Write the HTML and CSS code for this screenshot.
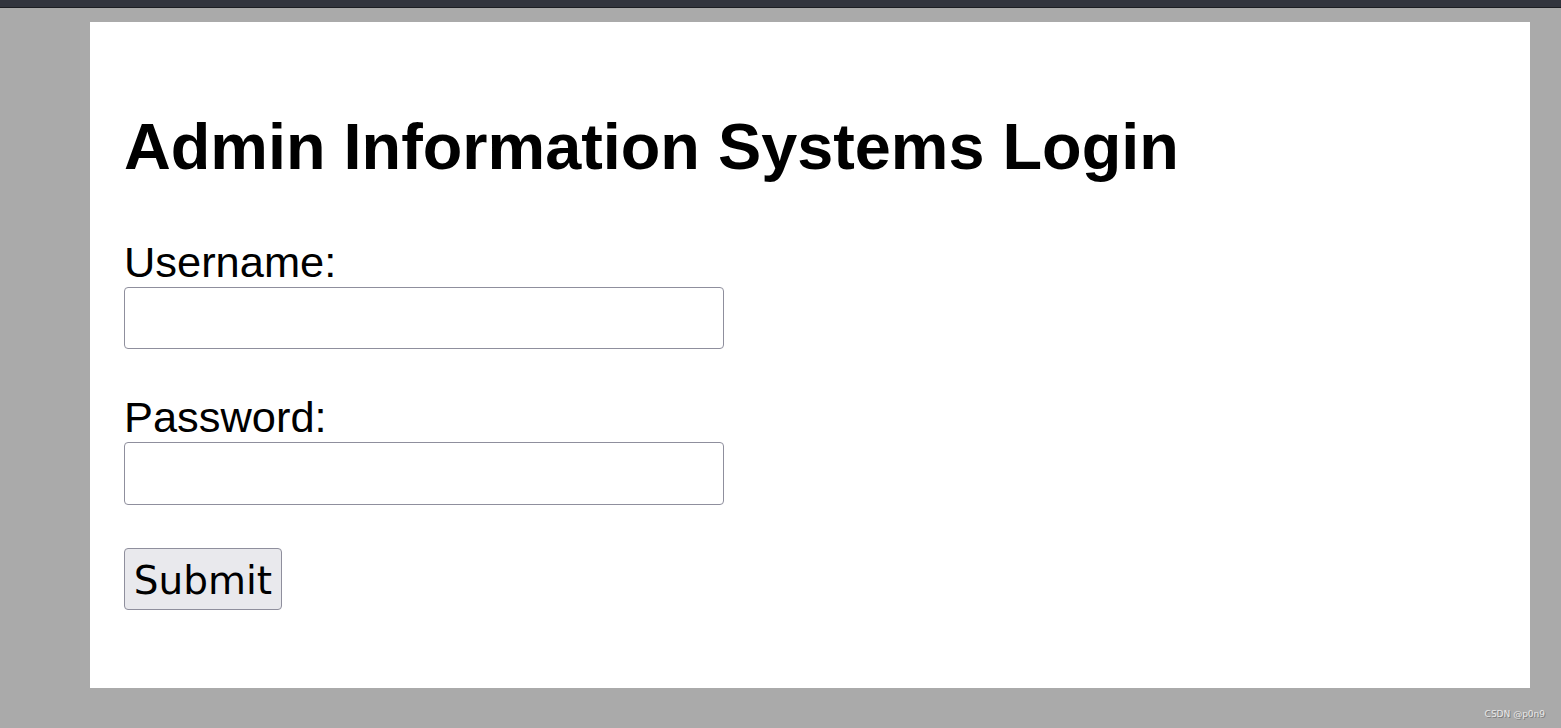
FILE: index.html
```html
<!DOCTYPE html>
<html>
<head>
<meta charset="utf-8">
<title>Admin Login</title>
<link rel="stylesheet" href="styles.css">
</head>
<body>
<div class="topbar"></div>
<main class="card">
  <h1 class="title">Admin Information Systems Login</h1>
  <form class="form">
    <label class="label" for="username">Username:</label>
    <input class="field" id="username" type="text">
    <label class="label label-pass" for="password">Password:</label>
    <input class="field field-pass" id="password" type="password">
    <button class="submit" type="button">Submit</button>
  </form>
</main>
<div class="watermark">CSDN @p0n9</div>
</body>
</html>
```

FILE: styles.css
```css
html, body {
  margin: 0;
  padding: 0;
}
body {
  background: #aaaaaa;
  width: 1561px;
  height: 728px;
  overflow: hidden;
  font-family: "Liberation Sans", Arial, sans-serif;
  position: relative;
}
.topbar {
  height: 7px;
  background: #32353e;
  border-bottom: 1px solid #1c1e23;
}
.card {
  margin: 14px 0 0 90px;
  width: 1440px;
  height: 666px;
  background: #ffffff;
  box-sizing: border-box;
  padding: 0 34px;
  overflow: hidden;
}
.title {
  margin: 0;
  padding-top: 92px;
  font-size: 64.8px;
  line-height: 65px;
  font-weight: bold;
  color: #000;
}
.form {
  display: flex;
  flex-direction: column;
  align-items: flex-start;
  margin-top: 58px;
}
.label {
  font-size: 43.4px;
  line-height: 50px;
  color: #000;
}
.label-pass {
  margin-top: 43px;
}
.field {
  margin: 0;
  width: 600px;
  height: 62px;
  box-sizing: border-box;
  border: 1px solid #8f8f9d;
  border-radius: 4px;
  background: #fff;
  padding: 0 8px;
  font-size: 30px;
}
.field-pass {
  height: 63px;
}
.submit {
  margin-top: 43px;
  width: 158px;
  height: 62px;
  box-sizing: border-box;
  border: 1px solid #8f8f9d;
  border-radius: 4px;
  background: #e9e9ed;
  font-family: "DejaVu Sans", sans-serif;
  font-size: 39px;
  color: #000;
  padding: 3px 0 0 0;
}
.watermark {
  position: absolute;
  right: 16px;
  bottom: 9px;
  font-family: "DejaVu Sans", sans-serif;
  font-size: 9px;
  color: #e8e8e8;
  text-shadow: 1px 1px 0 #7a7a7a;
}
```
